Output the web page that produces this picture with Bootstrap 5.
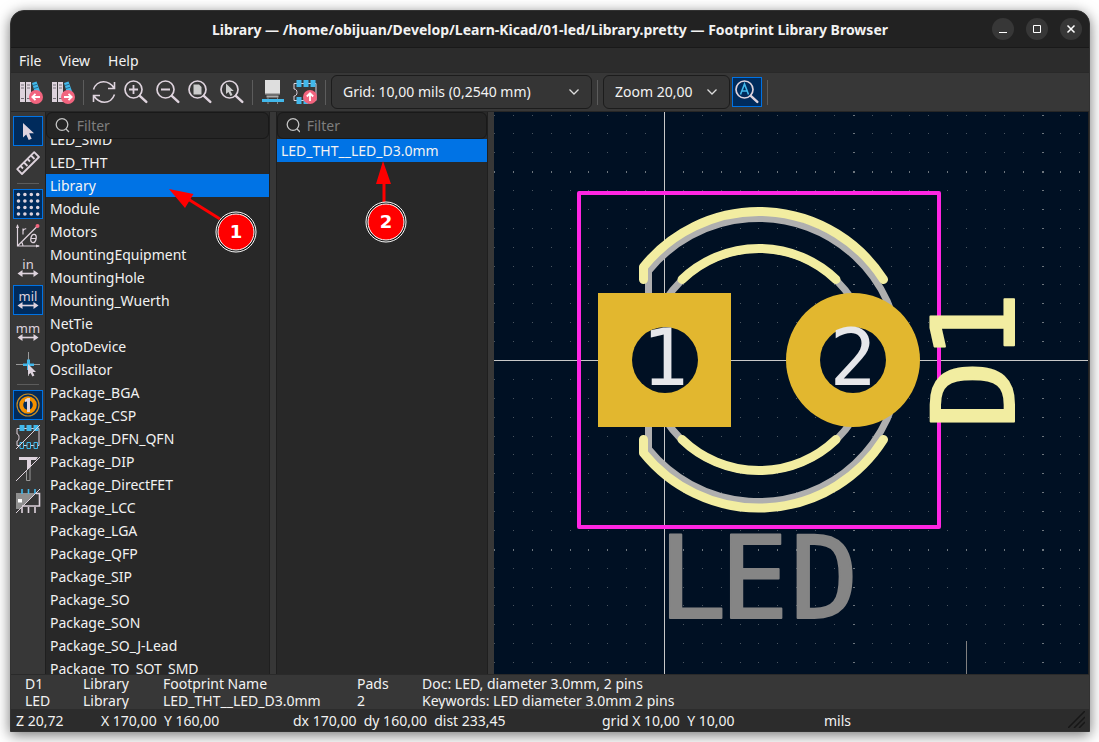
<!DOCTYPE html>
<html lang="en">
<head>
<meta charset="utf-8">
<meta name="viewport" content="width=device-width, initial-scale=1">
<title>Footprint Library Browser</title>
<link href="https://cdn.jsdelivr.net/npm/bootstrap@5.3.0/dist/css/bootstrap.min.css" rel="stylesheet">
<style>
  :root { --ink: #f2f2f2; --icon: #ded3dd; --bar: #373737; --dark: #2c2c2c; --deep: #282828; --line: #1f1f1f; --accent: #0073e5; --cyan: #42b8eb; --rose: #f2647e; }
  body { background: #fff; color: var(--ink); font: 14px/17px "Noto Sans", "Open Sans", sans-serif; padding: 10px 9px 10px 10px; }
  .app-window { background: var(--bar); border: 1px solid #323232; border-radius: 14px 14px 0 0; box-shadow: 0 3px 14px rgba(0,0,0,.55); min-height: 0; }
  .title-bar { background: #222; height: 37px; padding-top: 2px; border-bottom: 1px solid #191919; flex: none; }
  .title-bar h1 { font-size: 14px; line-height: 20px; font-weight: 700; }
  .window-btns { gap: 12px; right: 7px; top: 7px; }
  .window-btns button { width: 22px; height: 22px; border: 0; border-radius: 50%; background: #373737; padding: 0; display: flex; }
  .menu-bar { background: var(--dark); height: 25px; gap: 18px; border-bottom: 1px solid #292929; flex: none; }
  .menu-bar a { color: var(--ink); text-decoration: none; }
  .tool-bar { height: 39px; border-bottom: 1px solid #262626; gap: 2px; padding-left: 5px; flex: none; }
  .tool { width: 30px; height: 30px; padding: 2px; border: 1px solid transparent; background: none; display: flex; flex: none; border-radius: 0; }
  .tool svg { width: 24px; height: 24px; overflow: visible; }
  .tool.active { background: #002b5c; border-color: var(--accent); }
  .rule-v { width: 1px; height: 25px; background: #5c5c5c; margin: 0 3px; flex: none; }
  .rule-h { height: 1px; width: 22px; background: #5c5c5c; margin: 3px 0; flex: none; }
  .pick { appearance: none; height: 34px; color: var(--ink); border: 1px solid #1c1c1c; border-radius: 6px; padding: 0 11px 2px; font: inherit;
    background: #353535 url("data:image/svg+xml,%3Csvg xmlns='http://www.w3.org/2000/svg' width='12' height='8'%3E%3Cpath d='M1.500 1.500L6 6l4.500-4.500' fill='none' stroke='%23ddd' stroke-width='1.300'/%3E%3C/svg%3E") no-repeat right 11px center; }
  .pick-grid { width: 261px; }
  .pick-zoom { width: 127px; }
  .side-bar { width: 34px; padding: 4px 0 0; gap: 2px; flex: none; }
  .pane { background: var(--deep); min-height: 0; flex: none; border: solid var(--line); border-width: 0 1px; }
  .pane-libs { width: 225px; }
  .pane-parts { width: 212px; }
  .split { width: 6px; flex: none; }
  .filter { height: 27px; flex: none; border: 1px solid #191919; border-radius: 6px; background: #252525; padding: 0 8px; gap: 7px; }
  .filter input { background: none; border: 0; outline: 0; color: var(--ink); min-width: 0; padding: 0; font: inherit; }
  .filter input::placeholder { color: #7e7e7e; opacity: 1; }
  .names { min-height: 0; overflow: auto; scrollbar-width: none; }
  .names::-webkit-scrollbar { display: none; }
  .names li { height: 23px; line-height: 23px; padding-left: 4px; white-space: nowrap; }
  .names li.chosen { background: var(--accent); }
  .board { background: #001023; border-right: 1px solid #222; min-width: 0; }
  .board svg { width: 100%; height: 100%; display: block; }
  .marks { left: 0; top: 0; pointer-events: none; }
  .marks text { font: bold 18px "DejaVu Sans", sans-serif; }
  .pad-no { font: 78px "DejaVu Sans Mono", monospace; fill: #e6e7ea; }
  .stroke-text { font: 114px "DejaVu Sans Mono", monospace; stroke-linejoin: round; stroke-width: 2; }
  .unit { font: 13px "Noto Sans", sans-serif; fill: #ded3dd; text-anchor: middle; }
  .info { display: grid; grid-template-columns: 58px 80px 194px 65px 1fr; height: 35px; padding: 0 14px; border-top: 1px solid #2a2a2a; flex: none; white-space: nowrap; }
  .status { display: grid; grid-template-columns: 85px 192px 309px 222px 1fr; height: 22px; line-height: 23px; padding-left: 5px; background: var(--dark); flex: none; white-space: nowrap; }
</style>
</head>
<body class="vh-100 d-flex flex-column overflow-hidden">
<div class="app-window flex-grow-1 d-flex flex-column overflow-hidden">
  <header class="title-bar position-relative d-flex align-items-center justify-content-center">
    <h1 class="m-0">Library — /home/obijuan/Develop/Learn-Kicad/01-led/Library.pretty — Footprint Library Browser</h1>
    <div class="window-btns position-absolute d-flex">
      <button type="button" aria-label="Minimize"><svg width="22" height="22"><path d="M7 14.500h8" stroke="#fff"/></svg></button>
      <button type="button" aria-label="Maximize"><svg width="22" height="22"><path d="M7.500 7.500h7v7h-7z" stroke="#fff" fill="none"/></svg></button>
      <button type="button" aria-label="Close"><svg width="22" height="22"><path d="M7.500 7.500l7 7m0-7l-7 7" stroke="#fff" stroke-width="1.500"/></svg></button>
    </div>
  </header>
  <nav class="menu-bar d-flex align-items-center px-2" aria-label="Menu">
    <a href="#file">File</a><a href="#view">View</a><a href="#help">Help</a>
  </nav>
  <div class="tool-bar d-flex align-items-center">
    <button class="tool" type="button" aria-label="Previous footprint"><svg viewBox="0 0 24 24"><use href="#books"/><circle cx="17" cy="17" r="7" fill="#f2647e"/><path d="M21 17h-7.500m3-3.200L13.300 17l3.200 3.200" stroke="#fff" stroke-width="1.800" fill="none"/></svg></button>
    <button class="tool" type="button" aria-label="Next footprint"><svg viewBox="0 0 24 24"><use href="#books"/><circle cx="17" cy="17" r="7" fill="#f2647e"/><path d="M13 17h7.500m-3-3.200l3.200 3.200-3.200 3.200" stroke="#fff" stroke-width="1.800" fill="none"/></svg></button>
    <span class="rule-v"></span>
    <button class="tool" type="button" aria-label="Refresh"><svg viewBox="0 0 24 24" fill="none" stroke="#ded3dd" stroke-width="1.600"><path d="M1.500 9.500C3 5 7 1.800 11.500 1.800c4.200 0 7.800 2 10.500 6.200M22.500 2v6.500H16M22.500 14.500C21 19 17 22.200 12.500 22.200 8 22.200 4.500 20 2 16M1.500 22v-6.500H8"/></svg></button>
    <button class="tool" type="button" aria-label="Zoom in"><svg viewBox="0 0 24 24"><use href="#lens"/><path d="M5 9.500h9M9.500 5v9" stroke="#ded3dd" stroke-width="1.800"/></svg></button>
    <button class="tool" type="button" aria-label="Zoom out"><svg viewBox="0 0 24 24"><use href="#lens"/><path d="M5 9.500h9" stroke="#ded3dd" stroke-width="1.800"/></svg></button>
    <button class="tool" type="button" aria-label="Zoom to fit"><svg viewBox="0 0 24 24"><use href="#lens"/><path d="M5.500 4.500h5.500l2.500 2.500v7.500h-8z" fill="#ccc"/></svg></button>
    <button class="tool" type="button" aria-label="Zoom to selection"><svg viewBox="0 0 24 24"><use href="#lens"/><path d="M6 3.500v10.500l2.500-2 2 4 2-1-2-4h3.300z" fill="#ccc"/></svg></button>
    <span class="rule-v"></span>
    <button class="tool" type="button" aria-label="3D viewer"><svg viewBox="0 0 24 24"><path d="M4 0h15v14H4z" fill="#dedede"/><path d="M4 13h15v1.500H4zM5.500 15.500h12v2h-12z" fill="#aaa"/><path d="M7 17v7M16.500 17v7" stroke="#888"/><path d="M1 19h22v3H1z" fill="#42b8eb"/></svg></button>
    <button class="tool" type="button" aria-label="Insert footprint"><svg viewBox="0 0 24 24"><path d="M1 3.500h22v17H1V16c2 0 3-1.500 3-3.500S3 9 1 9z" fill="none" stroke="#ded3dd"/><path d="M3.500 0h5v7h-5zM10.500 0h5v7h-5zM17.500 0h5v7h-5zM3.500 17h5v7h-5zM10.500 17h5v7h-5z" fill="#42b8eb"/><circle cx="17" cy="17" r="7" fill="#f2647e"/><path d="M17 21v-7.500m-3.200 3l3.200-3.200 3.200 3.200" stroke="#fff" stroke-width="1.800" fill="none"/></svg></button>
    <span class="rule-v"></span>
    <select class="pick pick-grid" aria-label="Grid"><option>Grid: 10,00 mils (0,2540 mm)</option></select>
    <span class="rule-v"></span>
    <select class="pick pick-zoom" aria-label="Zoom"><option>Zoom 20,00</option></select>
    <button class="tool active" type="button" aria-label="Automatic zoom"><svg viewBox="0 0 24 24"><use href="#lens"/><path d="M5.500 14.500L9.500 4l4 10.500M7 11h5" fill="none" stroke="#42b8eb" stroke-width="1.600"/></svg></button>
    <span class="rule-v"></span>
  </div>

  <main class="position-relative d-flex flex-grow-1" style="min-height:0">
    <div class="side-bar d-flex flex-column align-items-center">
      <button class="tool active" type="button" aria-label="Select"><svg viewBox="0 0 24 24"><path d="M7 4v14.500l3.200-3 2.500 5.500 3-1.300-2.500-5.400H18z" fill="#ded3dd"/></svg></button>
      <button class="tool" type="button" aria-label="Measure"><svg viewBox="0 0 24 24" fill="none" stroke="#ded3dd" stroke-width="1.800" stroke-linejoin="round"><path d="M1.200 18.200l17-17 4.800 4.800-17 17zM4.500 15l2.500 2.500M8 11.500l3.500 3.500M11.500 8l2.500 2.500M15 4.500l3.500 3.500"/></svg></button>
      <span class="rule-h"></span>
      <button class="tool active" type="button" aria-label="Grid dots"><svg viewBox="0 0 24 24"><path d="M2.500 2.500h20M2.500 9h20M2.500 15.500h20M2.500 22h20" stroke="#ded3dd" stroke-width="3.600" stroke-linecap="round" stroke-dasharray="0 6.400"/></svg></button>
      <button class="tool" type="button" aria-label="Polar coordinates"><svg viewBox="0 0 24 24"><path d="M1.500 1v21H23M1.500 22L21 2.500M7 22c0-2-.5-3-1.800-4.200M7 10.500V4.500m0 2.500c.5-1.800 1.500-2.400 3.200-2.200" fill="none" stroke="#ded3dd" stroke-width="1.200"/><path d="M0 4l1.500-4L3 4zM20 20.500l4 1.500-4 1.500z" fill="#ded3dd"/><circle cx="21.500" cy="2" r="2" fill="#f2647e"/><ellipse cx="17.500" cy="14.500" rx="2.600" ry="4.200" transform="rotate(12 17.500 14.500)" fill="none" stroke="#ded3dd" stroke-width="1.300"/><path d="M15 14.500h5" stroke="#ded3dd"/></svg></button>
      <button class="tool" type="button" aria-label="Inches"><svg viewBox="0 0 24 24"><text x="12" y="13" class="unit">in</text><use href="#span"/></svg></button>
      <button class="tool active" type="button" aria-label="Mils"><svg viewBox="0 0 24 24"><text x="12" y="13" class="unit">mil</text><use href="#span"/></svg></button>
      <button class="tool" type="button" aria-label="Millimeters"><svg viewBox="0 0 24 24"><text x="12" y="13" class="unit">mm</text><use href="#span"/></svg></button>
      <button class="tool" type="button" aria-label="Full-window crosshairs"><svg viewBox="0 0 24 24"><path d="M0 12.500h24M12.500 0v24" stroke="#999"/><path d="M7 11.500h4V7.500h3v4h4v2.500h-4v4h-3v-4H7z" fill="#42b8eb"/><path d="M12 12v11l2.600-2 1.800 3.500 2-1-1.700-3.500h3.300z" fill="#ded3dd"/></svg></button>
      <span class="rule-h"></span>
      <button class="tool active" type="button" aria-label="Pad numbers"><svg viewBox="0 0 24 24"><circle cx="12" cy="12" r="11" fill="none" stroke="#c58a22" stroke-width="1.200"/><circle cx="12" cy="12" r="6.800" fill="none" stroke="#f29100" stroke-width="4"/><path d="M9 6.500l2.500-1.500H14v14h-3V8.500L9 9z" fill="#ded3dd"/></svg></button>
      <button class="tool" type="button" aria-label="Pad outlines"><svg viewBox="0 0 24 24"><path d="M1 3.500h22v17H1V16c1.500 0 2-1.500 2-3.500S2.500 9 1 9z" fill="none" stroke="#ded3dd"/><path d="M3.500 0h5v6h-5zM10.500 0h5v6h-5zM17.500 0h5v6h-5z" fill="#42b8eb"/><path d="M4 17.500h3.500v6H4zM11 17.500h3.500v6H11zM18 17.500h3.500v6H18z" fill="#373737" stroke="#42b8eb"/><path d="M0 24L24 0" stroke="#ded3dd"/></svg></button>
      <button class="tool" type="button" aria-label="Text outlines"><svg viewBox="0 0 24 24"><path d="M3 0h19l-2 3h-5v6l-4 4V3H3z" fill="#ded3dd"/><path d="M10.500 13v10.500h3.500V10" fill="none" stroke="#999"/><path d="M0 24L24 0" stroke="#ded3dd"/></svg></button>
      <button class="tool" type="button" aria-label="Graphic outlines"><svg viewBox="0 0 24 24"><path d="M0 4h20L4 20H0z" fill="#8f8f8f"/><path d="M2 10h4v3.500H2z" fill="#fff"/><path d="M6 0v5M12.500 0v5M19 0v5" stroke="#42b8eb" stroke-width="1.600"/><path d="M20 4.500h3.500V17H6M6 18v6M12.500 18v6M19 18v6" fill="none" stroke="#ded3dd" stroke-width="1.600"/><path d="M0 24L24 0" stroke="#ded3dd"/></svg></button>
    </div>

    <section class="pane pane-libs d-flex flex-column" aria-label="Libraries">
      <label class="filter d-flex align-items-center"><svg width="16" height="16"><use href="#find"/></svg><input class="flex-grow-1" type="text" placeholder="Filter" aria-label="Filter libraries"></label>
      <ul class="names list-unstyled m-0 flex-grow-1" id="libs">
        <li>LED_SMD</li><li>LED_THT</li><li class="chosen">Library</li><li>Module</li><li>Motors</li><li>MountingEquipment</li><li>MountingHole</li><li>Mounting_Wuerth</li><li>NetTie</li><li>OptoDevice</li><li>Oscillator</li><li>Package_BGA</li><li>Package_CSP</li><li>Package_DFN_QFN</li><li>Package_DIP</li><li>Package_DirectFET</li><li>Package_LCC</li><li>Package_LGA</li><li>Package_QFP</li><li>Package_SIP</li><li>Package_SO</li><li>Package_SON</li><li>Package_SO_J-Lead</li><li>Package_TO_SOT_SMD</li>
      </ul>
    </section>
    <div class="split"></div>
    <section class="pane pane-parts d-flex flex-column" aria-label="Footprints">
      <label class="filter d-flex align-items-center"><svg width="16" height="16"><use href="#find"/></svg><input class="flex-grow-1" type="text" placeholder="Filter" aria-label="Filter footprints"></label>
      <ul class="names list-unstyled m-0 flex-grow-1"><li class="chosen">LED_THT__LED_D3.0mm</li></ul>
    </section>
    <div class="split"></div>

    <div class="board flex-grow-1">
      <svg viewBox="494 112 594 562" preserveAspectRatio="xMidYMid slice" role="img" aria-label="Footprint preview">
        <g id="dots" fill="#4a5560" shape-rendering="crispEdges"></g>
        <path d="M664.500 112v562M494 360.500h594" stroke="#c8c8c8"/>
        <path d="M966.500 641v33" stroke="#808080"/>
        <path d="M579 193h360v334H579z" fill="none" stroke="#ff26e2" stroke-width="4" stroke-linejoin="round"/>
        <g fill="none" stroke="#afafaf" stroke-width="7">
          <circle cx="759" cy="360" r="111"/>
          <path d="M648.500 271v178A141.500 141.500 0 1 0 648.500 271z"/>
        </g>
        <g fill="none" stroke="#f2eda1" stroke-width="9" stroke-linecap="round" stroke-linejoin="round">
          <path d="M643.500 279.500V267A148 148 0 0 1 883.500 279.500"/>
          <path d="M643.500 439.500V453A148 148 0 0 0 883.500 439.500"/>
          <path d="M682 279.500a111 111 0 0 1 154 0M682 439.500a111 111 0 0 0 154 0"/>
        </g>
        <path d="M598 293h133v134H598z" fill="#e2b72f"/><circle cx="853" cy="360" r="67" fill="#e2b72f"/>
        <circle cx="665" cy="360" r="33" fill="#001023"/><circle cx="853" cy="360" r="33" fill="#001023"/>
        <text class="pad-no" x="665" y="385" text-anchor="middle">1</text><text class="pad-no" x="853" y="385" text-anchor="middle">2</text>
        <text class="stroke-text" transform="translate(1014 429) rotate(-90)" fill="#f2eda1" stroke="#f2eda1">D1</text>
        <text class="stroke-text" x="658 720 790" y="618" fill="#858585" stroke="#858585">LED</text>
      </svg>
    </div>

    <svg class="marks position-absolute" width="484" height="200" viewBox="11 112 484 200" aria-hidden="true">
      <g stroke="#f00" stroke-width="3" fill="#f00"><path d="M220 219l-32-20M384 202v-20"/></g>
      <path d="M169 189l24.500 5-8.500 14zM383 161l8 23h-15z" fill="#f00"/>
      <g fill="#f00" stroke="#fff"><circle cx="236" cy="232" r="20" fill="#111"/><circle cx="236" cy="232" r="18"/><circle cx="386" cy="222" r="20" fill="#111"/><circle cx="386" cy="222" r="18"/></g>
      <g fill="#fff" text-anchor="middle"><text x="236" y="238">1</text><text x="386" y="228">2</text></g>
    </svg>
  </main>

  <div class="info">
    <span>D1</span><span>Library</span><span>Footprint Name</span><span>Pads</span><span>Doc: LED, diameter 3.0mm, 2 pins</span>
    <span>LED</span><span>Library</span><span>LED_THT__LED_D3.0mm</span><span>2</span><span>Keywords: LED diameter 3.0mm 2 pins</span>
  </div>
  <footer class="status">
    <span>Z 20,72</span><span>X 170,00&nbsp; Y 160,00</span><span>dx 170,00&nbsp; dy 160,00&nbsp; dist 233,45</span><span>grid X 10,00&nbsp; Y 10,00</span>
    <span class="d-flex justify-content-between"><span>mils</span><svg class="mt-auto me-1 mb-1" width="17" height="17"><path d="M0 17L17 0M6 17L17 6M11 17l6-6" stroke="#171717" stroke-width="1.500"/></svg></span>
  </footer>
</div>

<svg width="0" height="0" class="position-absolute" aria-hidden="true">
  <defs>
    <g id="books"><path d="M1 2h5v20H1zM7 2h5v20H7z" fill="#ded3dd"/><path d="M2 5h3M2 8h3M8 5h3M8 8h3M2 18.500h3M8 18.500h3" stroke="#77727a"/><path d="M13 3l4.500-1.500L22 14l-5 2z" fill="#42b8eb"/><path d="M14 5.500l4-1.200M15 8.500l4-1.200" stroke="#226b90"/></g>
    <g id="lens" fill="none" stroke="#ded3dd"><circle cx="9.500" cy="9.500" r="8.500" stroke-width="1.700"/><path d="M15.800 15.800l6.500 6" stroke-width="2.500" stroke-linecap="round"/></g>
    <g id="find" fill="none" stroke="#c4c4c4" stroke-width="1.300"><circle cx="7" cy="6.500" r="5.800"/><path d="M11 11l3 3"/></g>
    <g id="span"><path d="M4 17.500h16" stroke="#ded3dd" stroke-width="1.600"/><path d="M1.500 17.500l5-3.500v7zM22.500 17.500l-5-3.500v7z" fill="#ded3dd"/></g>
  </defs>
</svg>
<script src="https://cdn.jsdelivr.net/npm/bootstrap@5.3.0/dist/js/bootstrap.bundle.min.js"></script>
<script>
  // Grid dots: one every 10 mils, with a heavier dot on each tenth row and column.
  const step = 18.88, parts = [];
  for (let i = -9; i <= 22; i++) for (let j = -13; j <= 16; j++) {
    if (!i || !j) continue;
    const w = i % 10 ? 1 : 2, h = j % 10 ? 1 : 2;
    parts.push(`<rect x="${Math.round(664 + i * step)}" y="${Math.round(360 + j * step)}" width="${w}" height="${h}"${w * h > 1 ? ' fill="#6c757d"' : ''}/>`);
  }
  document.getElementById('dots').innerHTML = parts.join('');
  document.getElementById('libs').scrollTop = 11;
</script>
</body>
</html>
